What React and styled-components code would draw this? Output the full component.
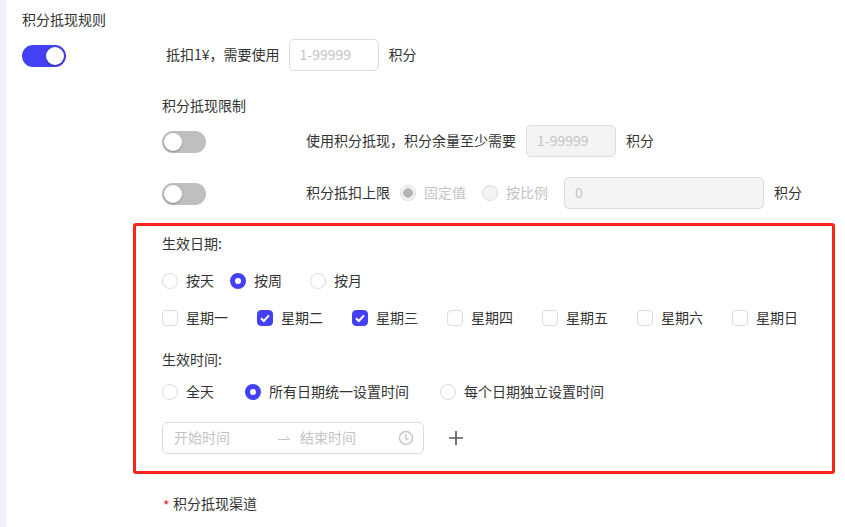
import styled, { createGlobalStyle } from 'styled-components';

const Global = createGlobalStyle`
  html, body {
    margin: 0;
    padding: 0;
    background: #fff;
  }
  body {
    font-family: "Noto Sans CJK SC", "Liberation Sans", sans-serif;
    font-size: 14px;
    line-height: 20px;
    color: #333;
  }
`;

const weekDays = [
  ['星期一', false],
  ['星期二', true],
  ['星期三', true],
  ['星期四', false],
  ['星期五', false],
  ['星期六', false],
  ['星期日', false],
];

const Radio = ({ checked, disabled, gap, children }) => (
  <RadioLabel $gap={gap} $disabled={disabled}>
    <RadioDot $checked={checked} $disabled={disabled} />
    <Text>{children}</Text>
  </RadioLabel>
);

export default function App() {
  return (
    <Page>
      <Global />
      <Rail />
      <Content>
        <Title>积分抵现规则</Title>
        <RuleRow>
          <SwitchSlot $width={144}>
            <Switch $on />
          </SwitchSlot>
          <Text $right={-1}>{'抵扣1¥\uFF0C需要使用'}</Text>
          <NumberBox>1-99999</NumberBox>
          <Text>积分</Text>
        </RuleRow>

        <LimitBlock>
          <Title>积分抵现限制</Title>
          <LimitRow $top={8}>
            <SwitchSlot $width={144}>
              <Switch />
            </SwitchSlot>
            <Text>{'使用积分抵现\uFF0C积分余量至少需要'}</Text>
            <NumberBox $disabled>1-99999</NumberBox>
            <Text>积分</Text>
          </LimitRow>
          <LimitRow $top={20}>
            <SwitchSlot $width={144}>
              <Switch />
            </SwitchSlot>
            <Text $right={10}>积分抵扣上限</Text>
            <Radio checked disabled gap={16}>固定值</Radio>
            <Radio disabled gap={6}>按比例</Radio>
            <NumberBox $disabled $width={200}>0</NumberBox>
            <Text>积分</Text>
          </LimitRow>
        </LimitBlock>

        <Highlight>
          <Title>生效日期:</Title>
          <RadioRow $top={15}>
            <Radio gap={16}>按天</Radio>
            <Radio checked gap={28}>按周</Radio>
            <Radio>按月</Radio>
          </RadioRow>
          <WeekGrid>
            {weekDays.map(([day, checked]) => (
              <CheckLabel key={day}>
                <CheckBox $checked={checked}>
                  {checked && (
                    <svg width="12" height="12" viewBox="0 0 12 12" fill="none">
                      <path d="M2 6.2 4.8 9 10 3.4" stroke="#fff" strokeWidth="2" />
                    </svg>
                  )}
                </CheckBox>
                <Text>{day}</Text>
              </CheckLabel>
            ))}
          </WeekGrid>
          <SectionLabel>生效时间:</SectionLabel>
          <RadioRow $top={10}>
            <Radio gap={31}>全天</Radio>
            <Radio checked gap={31}>所有日期统一设置时间</Radio>
            <Radio>每个日期独立设置时间</Radio>
          </RadioRow>
          <TimeRow>
            <TimeRange>
              <TimeHint $width={104}>开始时间</TimeHint>
              <svg width="12" height="8" viewBox="0 0 12 8" fill="none">
                <path d="M0 5.5H11.5L8 2" stroke="#c4c4c4" strokeWidth="1" />
              </svg>
              <TimeHint $width={98} $left={10}>结束时间</TimeHint>
              <svg width="16" height="16" viewBox="0 0 16 16" fill="none">
                <circle cx="8" cy="8" r="6.5" stroke="#c4c4c4" strokeWidth="1.4" />
                <path d="M7.8 4v4.4l2.6 1.6" stroke="#c4c4c4" strokeWidth="1.4" />
              </svg>
            </TimeRange>
            <svg width="14" height="14" viewBox="0 0 14 14" fill="none">
              <path d="M7 0v14M0 7h14" stroke="#555" strokeWidth="1.6" />
            </svg>
          </TimeRow>
        </Highlight>

        <ChannelTitle>
          <Star>*</Star>
          积分抵现渠道
        </ChannelTitle>
      </Content>
    </Page>
  );
}

const Page = styled.div`
  display: flex;
  height: 527px;
  overflow: hidden;
`;

const Rail = styled.div`
  width: 6px;
  flex: none;
  background: #eef2f6;
`;

const Content = styled.div`
  flex: 1;
  padding: 9px 0 0 16px;
`;

const Title = styled.div`
  height: 22px;
  white-space: nowrap;
`;

/* sits 1px above the row centre, as the labels do in the reference */
const Text = styled.span`
  padding-bottom: 2px;
  margin-right: ${(p) => p.$right || 0}px;
  white-space: nowrap;
`;

const RuleRow = styled.div`
  display: flex;
  align-items: center;
  height: 32px;
  margin-top: 8px;
`;

const SwitchSlot = styled.div`
  width: ${(p) => p.$width}px;
  flex: none;
  padding-top: 2px;
`;

const Switch = styled.div`
  position: relative;
  width: 44px;
  height: 22px;
  border-radius: 11px;
  background: ${(p) => (p.$on ? '#4340f5' : '#bfbfbf')};

  &::after {
    content: '';
    position: absolute;
    top: 2px;
    left: ${(p) => (p.$on ? '24px' : '2px')};
    width: 18px;
    height: 18px;
    border-radius: 50%;
    background: #fff;
    box-shadow: 0 1px 2px rgba(0, 0, 0, 0.3);
  }
`;

const NumberBox = styled.div`
  box-sizing: border-box;
  width: ${(p) => p.$width || 90}px;
  height: 32px;
  margin: 0 10px;
  padding-left: 10px;
  border: 1px solid #dcdcdc;
  border-radius: 5px;
  line-height: 28px;
  color: #c4c4c4;
  background: ${(p) => (p.$disabled ? '#f4f4f4' : '#fff')};
`;

const LimitBlock = styled.div`
  margin: 24px 0 0 140px;
`;

const LimitRow = styled.div`
  display: flex;
  align-items: center;
  height: 32px;
  margin-top: ${(p) => p.$top}px;
`;

const Highlight = styled.section`
  box-sizing: border-box;
  width: 702px;
  height: 251px;
  margin: 14px 0 0 111px;
  padding: 7px 0 0 26px;
  border: 3px solid #fa2419;
  border-radius: 3px;
`;

const SectionLabel = styled(Title)`
  margin-top: 20px;
`;

const RadioRow = styled.div`
  display: flex;
  align-items: center;
  height: 22px;
  margin-top: ${(p) => p.$top}px;
`;

const RadioLabel = styled.label`
  display: flex;
  align-items: center;
  gap: 8px;
  margin-right: ${(p) => p.$gap || 0}px;
  white-space: nowrap;
  color: ${(p) => (p.$disabled ? '#c4c4c4' : 'inherit')};
`;

const RadioDot = styled.span`
  box-sizing: border-box;
  width: 16px;
  height: 16px;
  flex: none;
  border-radius: 50%;
  border: ${(p) => {
    if (p.$checked && !p.$disabled) return '5px solid #4340f5';
    return '1px solid #dcdcdc';
  }};
  background: ${(p) => {
    if (p.$disabled && p.$checked) return 'radial-gradient(circle, #b4b4b4 0 4.5px, #f3f3f3 5px)';
    if (p.$disabled) return '#f3f3f3';
    return '#fff';
  }};
`;

const WeekGrid = styled.div`
  display: grid;
  grid-template-columns: repeat(7, 95px);
  height: 22px;
  margin-top: 15px;
`;

const CheckLabel = styled.label`
  display: flex;
  align-items: center;
  gap: 8px;
  white-space: nowrap;
`;

const CheckBox = styled.span`
  box-sizing: border-box;
  display: flex;
  align-items: center;
  justify-content: center;
  width: 16px;
  height: 16px;
  border-radius: 4px;
  border: 1px solid ${(p) => (p.$checked ? '#4340f5' : '#dcdcdc')};
  background: ${(p) => (p.$checked ? '#4340f5' : '#fff')};
`;

const TimeRow = styled.div`
  display: flex;
  align-items: center;
  gap: 25px;
  margin-top: 19px;
`;

const TimeRange = styled.div`
  box-sizing: border-box;
  display: flex;
  align-items: center;
  width: 262px;
  height: 32px;
  padding-left: 11px;
  border: 1px solid #dcdcdc;
  border-radius: 5px;
`;

const TimeHint = styled.span`
  width: ${(p) => p.$width}px;
  margin-left: ${(p) => p.$left || 0}px;
  padding-bottom: 2px;
  color: #c4c4c4;
  white-space: nowrap;
`;

const ChannelTitle = styled.div`
  display: flex;
  height: 22px;
  margin: 19px 0 0 141px;
  white-space: nowrap;
`;

const Star = styled.span`
  width: 10px;
  padding-top: 2px;
  color: #f5222d;
`;
